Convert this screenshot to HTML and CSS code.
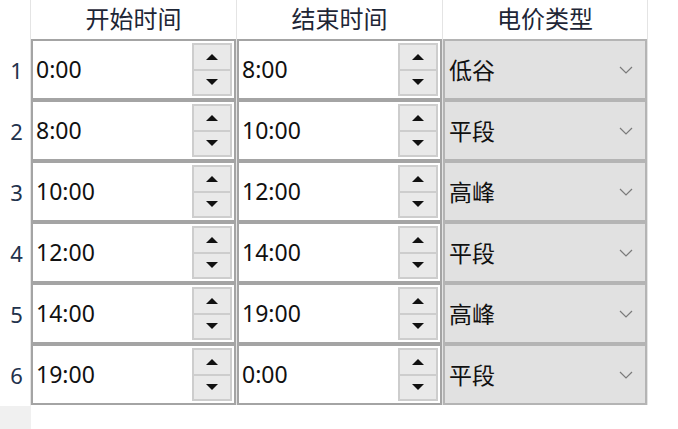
FILE: index.html
```html
<!DOCTYPE html>
<html lang="zh">
<head>
<meta charset="utf-8">
<link rel="stylesheet" href="styles.css">
</head>
<body>
<div class="table">
  <div class="hcell corner"></div>
  <div class="hcell">开始时间</div>
  <div class="hcell">结束时间</div>
  <div class="hcell">电价类型</div>

  <div class="rnum">1</div>
  <div class="cell"><div class="spin"><span class="val">0:00</span><div class="btns"><div class="btn up"></div><div class="btn down"></div></div></div></div>
  <div class="cell"><div class="spin"><span class="val">8:00</span><div class="btns"><div class="btn up"></div><div class="btn down"></div></div></div></div>
  <div class="cell"><div class="combo"><span class="val">低谷</span><svg class="chev" width="14" height="8" viewBox="0 0 14 8"><path d="M1 1 L7 7 L13 1" fill="none" stroke="#7a7a7a" stroke-width="1.2"/></svg></div></div>

  <div class="rnum">2</div>
  <div class="cell"><div class="spin"><span class="val">8:00</span><div class="btns"><div class="btn up"></div><div class="btn down"></div></div></div></div>
  <div class="cell"><div class="spin"><span class="val">10:00</span><div class="btns"><div class="btn up"></div><div class="btn down"></div></div></div></div>
  <div class="cell"><div class="combo"><span class="val">平段</span><svg class="chev" width="14" height="8" viewBox="0 0 14 8"><path d="M1 1 L7 7 L13 1" fill="none" stroke="#7a7a7a" stroke-width="1.2"/></svg></div></div>

  <div class="rnum">3</div>
  <div class="cell"><div class="spin"><span class="val">10:00</span><div class="btns"><div class="btn up"></div><div class="btn down"></div></div></div></div>
  <div class="cell"><div class="spin"><span class="val">12:00</span><div class="btns"><div class="btn up"></div><div class="btn down"></div></div></div></div>
  <div class="cell"><div class="combo"><span class="val">高峰</span><svg class="chev" width="14" height="8" viewBox="0 0 14 8"><path d="M1 1 L7 7 L13 1" fill="none" stroke="#7a7a7a" stroke-width="1.2"/></svg></div></div>

  <div class="rnum">4</div>
  <div class="cell"><div class="spin"><span class="val">12:00</span><div class="btns"><div class="btn up"></div><div class="btn down"></div></div></div></div>
  <div class="cell"><div class="spin"><span class="val">14:00</span><div class="btns"><div class="btn up"></div><div class="btn down"></div></div></div></div>
  <div class="cell"><div class="combo"><span class="val">平段</span><svg class="chev" width="14" height="8" viewBox="0 0 14 8"><path d="M1 1 L7 7 L13 1" fill="none" stroke="#7a7a7a" stroke-width="1.2"/></svg></div></div>

  <div class="rnum">5</div>
  <div class="cell"><div class="spin"><span class="val">14:00</span><div class="btns"><div class="btn up"></div><div class="btn down"></div></div></div></div>
  <div class="cell"><div class="spin"><span class="val">19:00</span><div class="btns"><div class="btn up"></div><div class="btn down"></div></div></div></div>
  <div class="cell"><div class="combo"><span class="val">高峰</span><svg class="chev" width="14" height="8" viewBox="0 0 14 8"><path d="M1 1 L7 7 L13 1" fill="none" stroke="#7a7a7a" stroke-width="1.2"/></svg></div></div>

  <div class="rnum">6</div>
  <div class="cell"><div class="spin"><span class="val">19:00</span><div class="btns"><div class="btn up"></div><div class="btn down"></div></div></div></div>
  <div class="cell"><div class="spin"><span class="val">0:00</span><div class="btns"><div class="btn up"></div><div class="btn down"></div></div></div></div>
  <div class="cell"><div class="combo"><span class="val">平段</span><svg class="chev" width="14" height="8" viewBox="0 0 14 8"><path d="M1 1 L7 7 L13 1" fill="none" stroke="#7a7a7a" stroke-width="1.2"/></svg></div></div>
</div>
<div class="foot"></div>
</body>
</html>
```
FILE: styles.css
```css
html, body {
  margin: 0;
  padding: 0;
  background: #ffffff;
  font-family: "Noto Sans", "Noto Sans CJK SC", sans-serif;
  color: #1a1a1a;
}

.table {
  display: grid;
  grid-template-columns: 30px 205px 205px 204px;
  grid-template-rows: 39px repeat(6, 60px);
  gap: 1px;
  background: #e4e4e4;
  width: 647px;
  border-right: 1px solid #e4e4e4;
}

.hcell {
  background: #ffffff;
  display: flex;
  align-items: center;
  justify-content: center;
  font-size: 24px;
  color: #1e2636;
  padding-bottom: 4px;
  box-sizing: border-box;
}

.hcell.corner {
  box-shadow: 0 1px 0 #ffffff;
}

.rnum {
  background: #ffffff;
  display: flex;
  align-items: center;
  justify-content: center;
  font-size: 22px;
  color: #22324c;
  padding-left: 3px;
  box-shadow: 0 1px 0 #ffffff;
}

.cell {
  background: #ffffff;
  display: flex;
}

.spin {
  flex: 1;
  display: flex;
  align-items: stretch;
  border: 2px solid #a4a4a4;
  background: #ffffff;
  padding: 2px;
  margin: -1px 0 0 0;
}

.val {
  flex: 1;
  display: flex;
  align-items: center;
  font-size: 23px;
  color: #111111;
  padding-left: 1px;
  padding-bottom: 1px;
}

.btns {
  width: 40px;
  display: flex;
  flex-direction: column;
}

.btn {
  flex: 1;
  background: #e9e9e9;
  border: 2px solid #cdcdcd;
  display: flex;
  align-items: center;
  justify-content: center;
}

.btn.up { border-bottom-width: 1px; }
.btn.down { border-top-width: 1px; }

.btn.up::after {
  content: "";
  border-left: 6px solid transparent;
  border-right: 6px solid transparent;
  border-bottom: 6px solid #111111;
}

.btn.down::after {
  content: "";
  border-left: 6px solid transparent;
  border-right: 6px solid transparent;
  border-top: 6px solid #111111;
}

.combo {
  flex: 1;
  display: flex;
  align-items: center;
  background: #e1e1e1;
  border: 2px solid #b4b4b4;
  padding: 0 12px 0 4px;
  margin-top: -1px;
}

.combo .val {
  padding-left: 0;
}

.chev {
  display: block;
}

.foot {
  width: 31px;
  height: 26px;
  background: #f0f0f0;
}
```
